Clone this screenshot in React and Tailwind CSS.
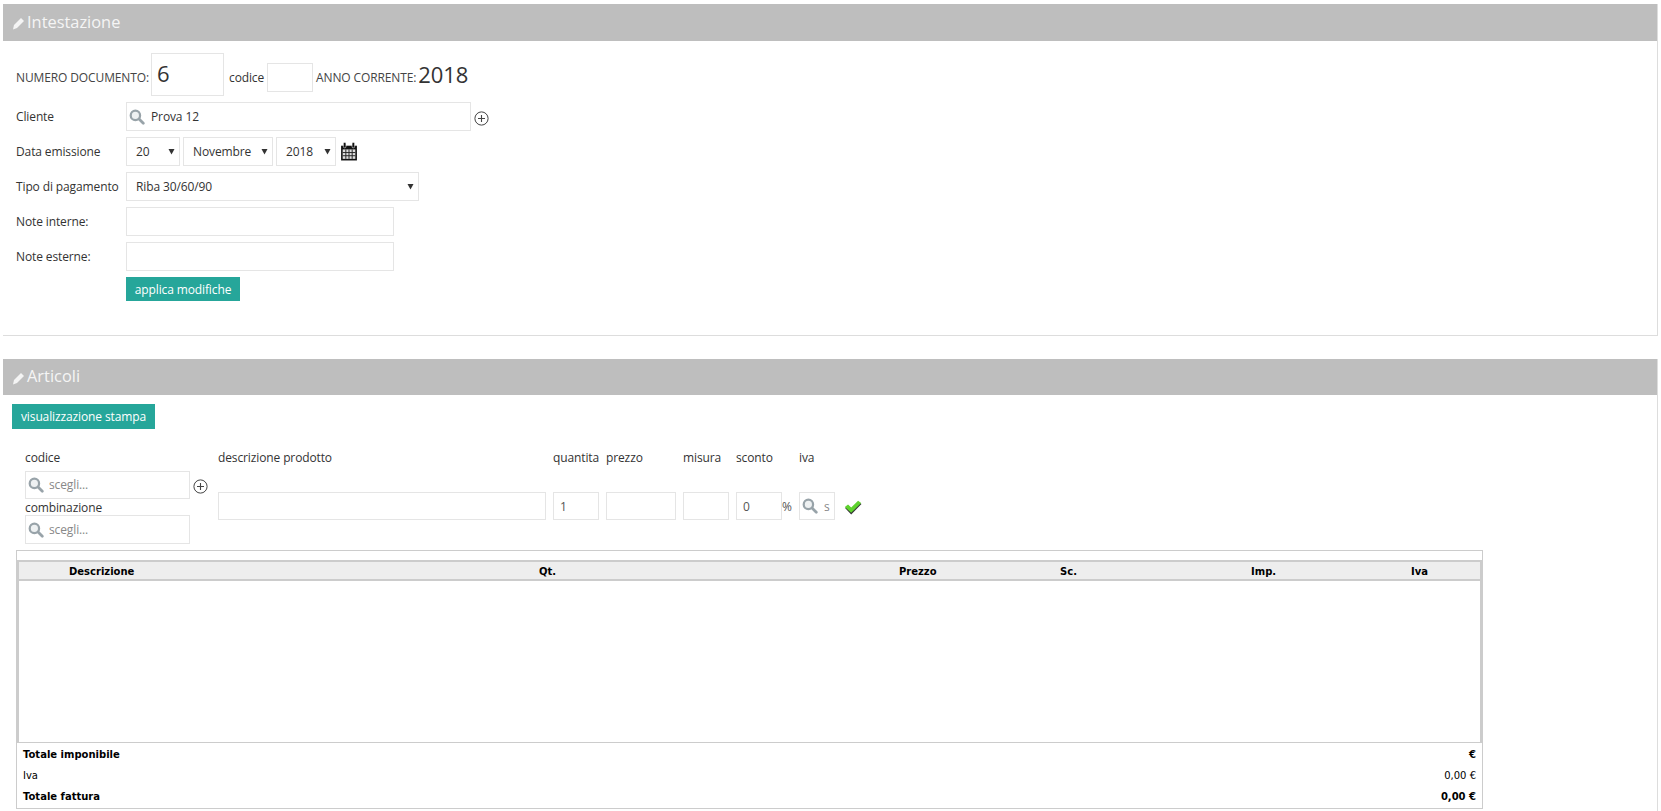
import React from "react";

function Pencil() {
  return (
    <svg width="13" height="13" viewBox="0 0 13 13" className="shrink-0 mt-[2px]">
      <path d="M9 1 L12 4 L5 11 L1 12.4 L2 8 Z" fill="#f4f4f4" />
    </svg>
  );
}

function Search({ className = "" }) {
  return (
    <svg width="16" height="16" viewBox="0 0 15 15" className={"shrink-0 " + className}>
      <circle cx="6" cy="6" r="4.4" fill="#eef1f2" stroke="#98a3a9" strokeWidth="2.1" />
      <path d="M9.4 9.4 L13.4 13.4" stroke="#98a3a9" strokeWidth="2.6" strokeLinecap="round" />
    </svg>
  );
}

function PlusCircle({ className = "" }) {
  return (
    <svg width="15" height="15" viewBox="0 0 15 15" className={"shrink-0 " + className}>
      <circle cx="7.5" cy="7.5" r="6.6" fill="none" stroke="#444" strokeWidth="1" />
      <path d="M7.5 4 V11 M4 7.5 H11" stroke="#444" strokeWidth="1.1" />
    </svg>
  );
}

function Calendar() {
  return (
    <svg width="18" height="19" viewBox="0 0 17 18" className="shrink-0 ml-[1px]">
      <path d="M1 3.5 H16 V17.5 H1 Z" fill="#111" />
      <rect x="3.2" y="0.5" width="2.4" height="5" rx="1" fill="#111" stroke="#fff" strokeWidth="0.5" />
      <rect x="11.4" y="0.5" width="2.4" height="5" rx="1" fill="#111" stroke="#fff" strokeWidth="0.5" />
      <path d="M2.5 7 H14.5 V16 H2.5 Z" fill="#ddd" />
      <path d="M5.5 7 V16 M8.5 7 V16 M11.5 7 V16 M2.5 10 H14.5 M2.5 13 H14.5" stroke="#222" strokeWidth="0.9" />
    </svg>
  );
}

function Check() {
  return (
    <svg width="18" height="15" viewBox="0 0 17 14" className="shrink-0">
      <path d="M1 7.5 L4 5 L6.8 8 L13.5 1.5 L16.5 3.8 L6.8 13.5 Z" fill="#111" opacity="0.85" />
      <path d="M0.8 6.6 L3.8 4.2 L6.8 7 L13.3 0.6 L16.2 2.8 L6.8 12 Z" fill="#5fd32e" />
    </svg>
  );
}

function Caret() {
  return (
    <svg width="7" height="7" viewBox="0 0 7 7" className="shrink-0">
      <path d="M0.5 1 H6.5 L3.5 6.5 Z" fill="#333" />
    </svg>
  );
}

function Box({ className = "", children }) {
  return (
    <div className={"border border-[#e5e5e5] bg-white flex items-center shrink-0 " + className}>
      {children}
    </div>
  );
}

function Select({ width, children }) {
  return (
    <Box className={"h-[29px] pl-[9px] pr-[4px] justify-between " + width}>
      <span>{children}</span>
      <Caret />
    </Box>
  );
}

function Header({ title, h }) {
  return (
    <div className={"bg-[#bebebe] flex items-center pl-[9px] gap-[2px] " + h}>
      <Pencil />
      <span className="text-[16.4px] tracking-normal leading-none text-[#f5f5f5] pb-[1px]">{title}</span>
    </div>
  );
}

function Row({ label, children, className = "" }) {
  return (
    <div className={"flex items-center " + className}>
      <span className="w-[110px] shrink-0">{label}</span>
      {children}
    </div>
  );
}

function Intestazione() {
  return (
    <section className="border-r border-b border-[#dddddd] h-[332px]">
      <Header title="Intestazione" h="h-[37px]" />
      <div className="pl-[13px] pt-[12px]">
        <div className="flex items-center h-[43px]">
          <span className="w-[135px] shrink-0 whitespace-nowrap text-[#444] mt-[6px]">NUMERO DOCUMENTO:</span>
          <Box className="w-[73px] h-[43px] pl-[5px] pb-[3px] text-[22px]">6</Box>
          <span className="ml-[5px] w-[38px] mt-[6px]">codice</span>
          <Box className="w-[46px] h-[29px] mr-[3px] mt-[6px]" />
          <span className="text-[#444] whitespace-nowrap mt-[6px]">ANNO CORRENTE:</span>
          <span className="text-[22px] ml-[2px] leading-none pb-[2px]">2018</span>
        </div>
        <Row label="Cliente" className="mt-[6px]">
          <Box className="w-[345px] h-[29px] pl-[2px] gap-[6px]">
            <Search />
            <span>Prova 12</span>
          </Box>
          <PlusCircle className="ml-[3px] mt-[3px]" />
        </Row>
        <Row label="Data emissione" className="mt-[6px]">
          <div className="flex items-center gap-[3px]">
            <Select width="w-[54px]">20</Select>
            <Select width="w-[90px]">Novembre</Select>
            <Select width="w-[60px]">2018</Select>
            <Calendar />
          </div>
        </Row>
        <Row label="Tipo di pagamento" className="mt-[6px]">
          <Select width="w-[293px]">Riba 30/60/90</Select>
        </Row>
        <Row label="Note interne:" className="mt-[6px]">
          <Box className="w-[268px] h-[29px]" />
        </Row>
        <Row label="Note esterne:" className="mt-[6px]">
          <Box className="w-[268px] h-[29px]" />
        </Row>
        <div className="pl-[110px] mt-[6px]">
          <button className="bg-[#26a69a] text-white h-[24px] w-[114px] text-[12px] leading-none pt-[1px]">applica modifiche</button>
        </div>
      </div>
    </section>
  );
}

function Cols() {
  return (
    <div className="flex pl-[22px] pt-[9px]">
      <div className="w-[193px] shrink-0">
        <div className="h-[25px] pt-[11px] leading-[18px] whitespace-nowrap">codice</div>
        <div className="flex items-center mt-[8px]">
          <Box className="w-[165px] h-[28px] pl-[2px] gap-[5px] text-[#888]">
            <Search />
            <span>scegli...</span>
          </Box>
          <PlusCircle className="ml-[3px] mt-[2px]" />
        </div>
        <div className="h-[16px] leading-[18px]">combinazione</div>
        <Box className="w-[165px] h-[29px] pl-[2px] gap-[5px] text-[#888]">
          <Search />
          <span>scegli...</span>
        </Box>
      </div>
      <div className="flex flex-col">
        <div className="flex h-[25px] pt-[11px] leading-[18px] whitespace-nowrap">
          <span className="w-[335px] shrink-0">descrizione prodotto</span>
          <span className="w-[53px] shrink-0">quantita</span>
          <span className="w-[77px] shrink-0">prezzo</span>
          <span className="w-[53px] shrink-0">misura</span>
          <span className="w-[63px] shrink-0">sconto</span>
          <span>iva</span>
        </div>
        <div className="flex items-center mt-[29px]">
          <Box className="w-[328px] h-[28px] mr-[7px]" />
          <Box className="w-[46px] h-[28px] mr-[7px] pl-[6px] pt-[2px] text-[#555]">1</Box>
          <Box className="w-[70px] h-[28px] mr-[7px]" />
          <Box className="w-[46px] h-[28px] mr-[7px]" />
          <Box className="w-[46px] h-[28px] pl-[6px] pt-[2px] text-[#555]">0</Box>
          <span className="w-[17px] shrink-0 text-[#555] pt-[2px]">%</span>
          <Box className="w-[36px] h-[28px] pl-[2px] gap-[6px] text-[#888] overflow-hidden">
            <Search />
            <span className="pt-[2px]">s</span>
          </Box>
          <span className="ml-[9px] mt-[3px]"><Check /></span>
        </div>
      </div>
    </div>
  );
}

function TotalRow({ label, value, bold }) {
  return (
    <div className={"flex justify-between items-center h-[21px] pl-[6px] pr-[6px] text-black " + (bold ? "font-bold" : "")}>
      <span>{label}</span>
      <span>{value}</span>
    </div>
  );
}

function Tabella() {
  return (
    <div className="ml-[13px] mt-[6px] w-[1467px] border border-[#cccccc] font-['DejaVu_Sans',Verdana,sans-serif] text-[10px] tracking-normal">
      <div className="h-[9px]" />
      <div className="border-x-2 border-[#cccccc] border-t-2 border-t-[#cccccc]">
        <div className="flex items-center h-[15px] pt-[2px] bg-[#eeeeee] border-b-2 border-[#cccccc] font-bold text-black box-content">
          <span className="w-[520px] pl-[50px] shrink-0">Descrizione</span>
          <span className="w-[360px] shrink-0">Qt.</span>
          <span className="w-[161px] shrink-0">Prezzo</span>
          <span className="w-[191px] shrink-0">Sc.</span>
          <span className="w-[160px] shrink-0">Imp.</span>
          <span>Iva</span>
        </div>
        <div className="h-[161px]" />
      </div>
      <div className="border-t border-[#cccccc] pt-[1px] pb-[1px]">
        <TotalRow label="Totale imponibile" value="€" bold />
        <TotalRow label="Iva" value="0,00 €" />
        <TotalRow label="Totale fattura" value="0,00 €" bold />
      </div>
    </div>
  );
}

function Articoli() {
  return (
    <section className="border-r border-[#dddddd] mt-[23px] h-[452px]">
      <Header title="Articoli" h="h-[36px]" />
      <div className="pt-[9px]">
        <button className="block ml-[9px] bg-[#26a69a] text-white h-[25px] w-[143px] text-[12px] leading-none pt-[1px]">visualizzazione stampa</button>
        <Cols />
        <Tabella />
      </div>
    </section>
  );
}

export default function App() {
  return (
    <div className="bg-white h-[811px] overflow-hidden pl-[3px] pr-[3px] pt-[4px] text-[12px] leading-[16px] tracking-[-0.12px] text-[#333] font-['Open_Sans',sans-serif]">
      <Intestazione />
      <Articoli />
    </div>
  );
}
